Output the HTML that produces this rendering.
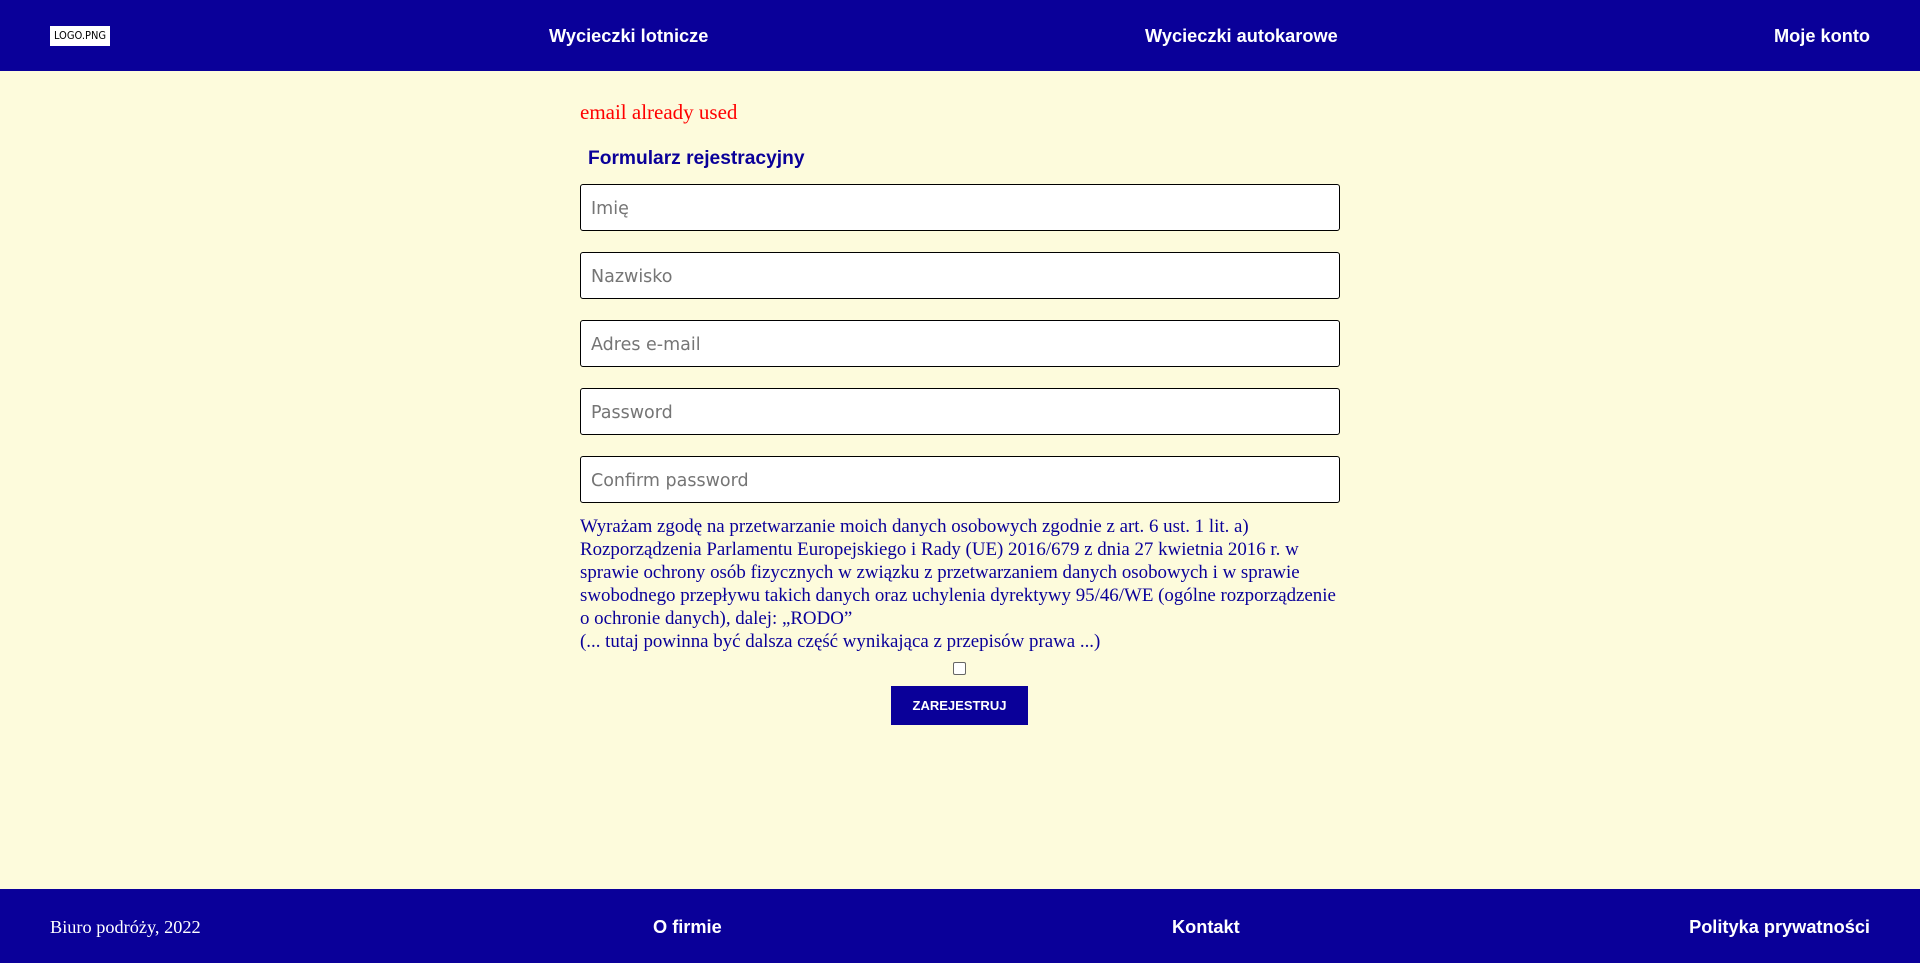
<!DOCTYPE html>
<html><head><meta charset="utf-8"><style>
*{box-sizing:border-box;margin:0;padding:0}
html,body{width:1920px;height:963px;overflow:hidden}
body{background:#fdfbdc;position:relative;font-family:"Liberation Sans",sans-serif}
.hdr{position:absolute;left:0;top:0;width:1920px;height:71px;background:#0a0099}
.ftr{position:absolute;left:0;top:889px;width:1920px;height:74px;background:#0a0099}
.nav{position:absolute;color:#fff;font-weight:bold;font-size:18.2px;line-height:22px;white-space:nowrap}
.logo{position:absolute;left:50px;top:26px;width:60px;height:20px;background:#fff;color:#000;font-size:11px;line-height:20px;text-align:center;font-family:"DejaVu Sans Condensed","DejaVu Sans",sans-serif}
.err{position:absolute;left:580px;top:99px;color:#f00;font-family:"Liberation Serif",serif;font-size:21px;line-height:26px}
.h{position:absolute;left:588px;top:147px;color:#0a0099;font-weight:bold;font-size:19.2px;line-height:24px}
.in{position:absolute;left:580px;width:760px;height:47px;background:#fff;border:1.5px solid #000;border-radius:3px;color:#757575;font-family:"DejaVu Sans",sans-serif;font-size:17.5px;line-height:48px;padding-left:10px}
.txt{position:absolute;left:580px;top:515px;color:#0a0099;font-family:"Liberation Serif",serif;font-size:18.9px;line-height:23px;white-space:nowrap}
.cb{position:absolute;left:953px;top:662px;width:13px;height:13px;border:1.5px solid #666;border-radius:2px;background:#fff}
.btn{position:absolute;left:891px;top:686px;width:137px;height:39px;background:#0a0099;color:#fff;font-weight:bold;font-size:13px;line-height:40px;text-align:center}
</style></head><body>
<div class="hdr">
<div class="logo">LOGO.PNG</div>
<div class="nav" style="left:549px;top:25px">Wycieczki lotnicze</div>
<div class="nav" style="left:1145px;top:25px">Wycieczki autokarowe</div>
<div class="nav" style="right:50px;top:25px">Moje konto</div>
</div>
<div class="err">email already used</div>
<div class="h">Formularz rejestracyjny</div>
<div class="in" style="top:184px">Imię</div>
<div class="in" style="top:252px">Nazwisko</div>
<div class="in" style="top:320px">Adres e-mail</div>
<div class="in" style="top:388px">Password</div>
<div class="in" style="top:456px">Confirm password</div>
<div class="txt">Wyrażam zgodę na przetwarzanie moich danych osobowych zgodnie z art. 6 ust. 1 lit. a)<br>Rozporządzenia Parlamentu Europejskiego i Rady (UE) 2016/679 z dnia 27 kwietnia 2016 r. w<br>sprawie ochrony osób fizycznych w związku z przetwarzaniem danych osobowych i w sprawie<br>swobodnego przepływu takich danych oraz uchylenia dyrektywy 95/46/WE (ogólne rozporządzenie<br>o ochronie danych), dalej: „RODO”<br>(... tutaj powinna być dalsza część wynikająca z przepisów prawa ...)</div>
<div class="cb"></div>
<div class="btn">ZAREJESTRUJ</div>
<div class="ftr">
<div class="nav" style="left:50px;top:27px;font-weight:normal;font-family:'Liberation Serif',serif;font-size:18.3px">Biuro podróży, 2022</div>
<div class="nav" style="left:653px;top:27px">O firmie</div>
<div class="nav" style="left:1172px;top:27px">Kontakt</div>
<div class="nav" style="right:50px;top:27px">Polityka prywatności</div>
</div>
</body></html>
